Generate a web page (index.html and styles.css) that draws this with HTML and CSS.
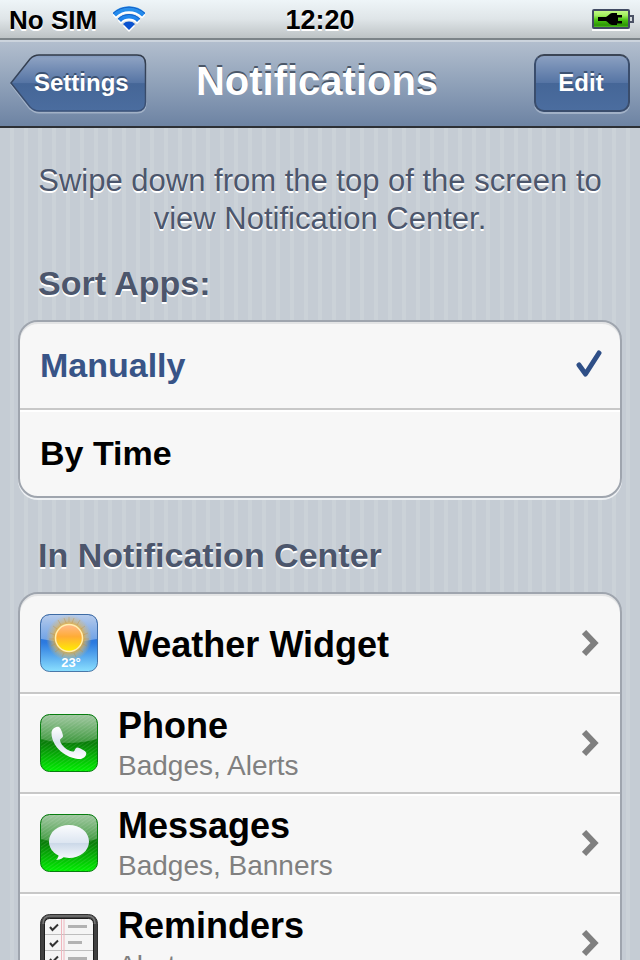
FILE: index.html
```html
<!DOCTYPE html>
<html lang="en">
<head>
<meta charset="utf-8">
<meta name="viewport" content="width=device-width, initial-scale=1">
<title>Notifications</title>
<link rel="stylesheet" href="styles.css">
</head>
<body>
<div class="status">
  <div class="carrier">
    <span>No SIM</span>
    <svg class="wifi" width="32" height="26" viewBox="0 0 32 26" aria-hidden="true">
      <defs><linearGradient id="wf" gradientUnits="userSpaceOnUse" x1="0" y1="0" x2="0" y2="24"><stop offset="0" stop-color="#2b93ea"/><stop offset=".5" stop-color="#1f86ee"/><stop offset="1" stop-color="#0b4fc8"/></linearGradient></defs>
      <g fill="none" stroke="#fff" transform="translate(0 2)"><path d="M1.2 8.8A21.2 21.2 0 0 1 30.8 8.8" stroke-width="5"/><path d="M6.4 14.3A13.7 13.7 0 0 1 25.6 14.3" stroke-width="4.5"/><path d="M16 24L10 18A8.5 8.5 0 0 1 22 18Z" fill="#fff" stroke="none"/></g>
      <g fill="none" stroke="url(#wf)"><path d="M1.2 8.8A21.2 21.2 0 0 1 30.8 8.8" stroke-width="5"/><path d="M6.4 14.3A13.7 13.7 0 0 1 25.6 14.3" stroke-width="4.5"/></g>
      <g fill="none" stroke="#1560c8" stroke-width="1"><path d="M0 7.5A23.5 23.5 0 0 1 32 7.5"/><path d="M5 13A15.5 15.5 0 0 1 27 13"/></g>
      <path d="M16 24L10 18A8.5 8.5 0 0 1 22 18Z" fill="#0b52cf"/>
    </svg>
  </div>
  <time class="clock">12:20</time>
  <svg class="battery" width="42" height="23" viewBox="0 0 42 23" role="img" aria-label="Battery charging">
    <defs><linearGradient id="bt" x1="0" y1="0" x2="0" y2="1"><stop offset="0" stop-color="#c9fb8c"/><stop offset=".3" stop-color="#a2ee5f"/><stop offset=".55" stop-color="#4cc313"/><stop offset=".85" stop-color="#2b9605"/><stop offset="1" stop-color="#6bd63a"/></linearGradient></defs>
    <path d="M0 20H38V22H0Z" fill="#fff" opacity=".9"/>
    <rect x="1" y="1" width="36" height="18" rx="1" fill="url(#bt)" stroke="#414a63" stroke-width="2"/>
    <path d="M38 7H41V13H38" fill="#d5dadd" stroke="#4b5265" stroke-width="2"/>
    <path d="M6 8H14C16 7 18 4 20 4H25V6H30V8.5H26V12H30V14.5H25V16H20C18 16 16 13 14 12H6Z" fill="#000"/>
  </svg>
</div>

<header class="nav">
  <button class="btn back" type="button">
    <svg class="shape" width="138" height="62" viewBox="0 0 138 62" aria-hidden="true">
      <defs><linearGradient id="bk" x1="0" y1="0" x2="0" y2="1"><stop offset="0" stop-color="#8098bd"/><stop offset=".06" stop-color="#8ba0c1"/><stop offset=".5" stop-color="#5574a4"/><stop offset=".51" stop-color="#456697"/><stop offset="1" stop-color="#4b6d9f"/></linearGradient>
      <linearGradient id="be" x1="0" y1="0" x2="0" y2="1"><stop offset="0" stop-color="#323b49"/><stop offset="1" stop-color="#3b5279"/></linearGradient></defs>
      <path d="M1.5 30.5L20 6.5Q24.5 2.5 29 2.5H127Q135.5 2.5 135.5 11V50Q135.5 58.5 127 58.5H29Q24.5 58.5 20 54.5Z" fill="none" stroke="#b9c5d5" stroke-width="2" opacity=".65"/>
      <path d="M1 29L20 5Q24 1 29 1H127Q135.5 1 135.5 10V48Q135.5 57 127 57H29Q24 57 20 53Z" fill="url(#bk)" stroke="url(#be)" stroke-width="1.5"/>
    </svg>
    <span>Settings</span>
  </button>
  <h1>Notifications</h1>
  <button class="btn edit" type="button">Edit</button>
</header>

<main>
  <p class="hint">Swipe down from the top of the screen to view Notification Center.</p>

  <h2 id="sort">Sort Apps:</h2>
  <div class="group" role="radiogroup" aria-labelledby="sort">
    <label class="row option"><input type="radio" name="sort" checked><span>Manually</span>
      <svg class="check" width="26" height="28" viewBox="0 0 26 28" aria-hidden="true"><path d="M3 15L9.5 24L23 3" fill="none" stroke="#2f4f87" stroke-width="5" stroke-linecap="round" stroke-linejoin="round"/></svg>
    </label>
    <label class="row option"><input type="radio" name="sort"><span>By Time</span>
      <svg class="check" width="26" height="28" viewBox="0 0 26 28" aria-hidden="true"><path d="M3 15L9.5 24L23 3" fill="none" stroke="#2f4f87" stroke-width="5" stroke-linecap="round" stroke-linejoin="round"/></svg>
    </label>
  </div>

  <h2>In Notification Center</h2>
  <div class="group">
    <a class="row app" href="#weather">
      <svg width="58" height="58" viewBox="0 0 58 58" aria-hidden="true">
        <defs>
          <linearGradient id="sky" x1="0" y1="0" x2="0" y2="1"><stop offset="0" stop-color="#1c5fc4"/><stop offset=".5" stop-color="#2d7be0"/><stop offset="1" stop-color="#8be0ff"/></linearGradient>
          <linearGradient id="gl" x1="0" y1="0" x2="0" y2="1"><stop offset="0" stop-color="#fff" stop-opacity=".68"/><stop offset="1" stop-color="#fff" stop-opacity=".3"/></linearGradient>
          <radialGradient id="glow"><stop offset=".55" stop-color="#f0a818" stop-opacity=".95"/><stop offset=".75" stop-color="#d9b66a" stop-opacity=".6"/><stop offset="1" stop-color="#d9b66a" stop-opacity="0"/></radialGradient>
          <linearGradient id="sun" x1="0" y1="0" x2="0" y2="1"><stop offset="0" stop-color="#ffb98a"/><stop offset=".45" stop-color="#ffac35"/><stop offset="1" stop-color="#fff000"/></linearGradient>
        </defs>
        <rect x=".5" y=".5" width="57" height="57" rx="9" fill="url(#sky)"/>
        <path d="M1 25V10Q1 1 10 1H48Q57 1 57 10V25Q29 31 1 25Z" fill="url(#gl)"/>
        <circle cx="29" cy="24" r="23" fill="url(#glow)"/>
        <g stroke="#c78c31" stroke-width="1" opacity=".35"><path d="M29 3V8M24 4L26 9M34 4L32 9M18 6L21 11M40 6L37 11M13 12L17 15M45 12L41 15M10 19L15 21M48 19L43 21M9 25H14M49 25H44M11 32L15 30M47 32L43 30M15 38L19 35M43 38L39 35M22 43L24 39M36 43L34 39"/></g>
        <circle cx="29" cy="24" r="13.5" fill="url(#sun)" stroke="#ffeeb0" stroke-width="1.5"/>
        <text class="temp" x="31" y="53" text-anchor="middle">23°</text>
        <rect x=".5" y=".5" width="57" height="57" rx="9" fill="none" stroke="#2c5b95" stroke-opacity=".8"/>
      </svg>
      <span class="text"><b>Weather Widget</b></span>
      <svg class="chev" width="18" height="28" viewBox="0 0 18 28" aria-hidden="true"><path d="M2 3L12.5 14L2 25" fill="none" stroke="#7f7f7f" stroke-width="6"/></svg>
    </a>
    <a class="row app" href="#phone">
      <svg width="58" height="58" viewBox="0 0 58 58" aria-hidden="true">
        <defs>
          <linearGradient id="gr" x1="0" y1="0" x2="0" y2="1"><stop offset="0" stop-color="#3f8f3f"/><stop offset=".5" stop-color="#087d08"/><stop offset="1" stop-color="#00f000"/></linearGradient>
          <linearGradient id="gg" x1="0" y1="0" x2="0" y2="1"><stop offset="0" stop-color="#fff" stop-opacity=".5"/><stop offset="1" stop-color="#fff" stop-opacity=".2"/></linearGradient>
          <linearGradient id="wh" x1="0" y1="0" x2="0" y2="1"><stop offset="0" stop-color="#fff"/><stop offset=".5" stop-color="#dbe4f0"/><stop offset="1" stop-color="#fff"/></linearGradient>
          <pattern id="st" width="3" height="3" patternUnits="userSpaceOnUse" patternTransform="rotate(-35)"><rect width="3" height="1" fill="#fff" opacity=".1"/></pattern>
        </defs>
        <rect x=".5" y=".5" width="57" height="57" rx="9" fill="url(#gr)"/>
        <rect x=".5" y=".5" width="57" height="57" rx="9" fill="url(#st)"/>
        <path d="M1 25V10Q1 1 10 1H48Q57 1 57 10V25Q29 33 1 25Z" fill="url(#gg)"/>
        <path d="M11.5 19C11.5 15 15 12.5 18.5 12.7C20.5 13 23 20 23 22C23 24 20 24.5 20 26.5C21 32 29 38 33.5 37.5C35 37 35 33.5 37.5 33.5C40 34 46 37 46.3 39C46.5 43 42 45.5 38 45C23 43 11.5 31 11.5 19Z" fill="url(#wh)"/>
        <rect x=".5" y=".5" width="57" height="57" rx="9" fill="none" stroke="#087d10"/>
      </svg>
      <span class="text"><b>Phone</b><small>Badges, Alerts</small></span>
      <svg class="chev" width="18" height="28" viewBox="0 0 18 28" aria-hidden="true"><path d="M2 3L12.5 14L2 25" fill="none" stroke="#7f7f7f" stroke-width="6"/></svg>
    </a>
    <a class="row app" href="#messages">
      <svg width="58" height="58" viewBox="0 0 58 58" aria-hidden="true">
        <defs><linearGradient id="bub" x1="0" y1="0" x2="0" y2="1"><stop offset="0" stop-color="#fbfcfe"/><stop offset=".5" stop-color="#dde6f1"/><stop offset=".52" stop-color="#cbd8e8"/><stop offset="1" stop-color="#fafcfe"/></linearGradient></defs>
        <rect x=".5" y=".5" width="57" height="57" rx="9" fill="url(#gr)"/>
        <rect x=".5" y=".5" width="57" height="57" rx="9" fill="url(#st)"/>
        <path d="M1 25V10Q1 1 10 1H48Q57 1 57 10V25Q29 33 1 25Z" fill="url(#gg)"/>
        <path d="M29 11C40 11 49 18 49 27.5C49 37 40 44 29 44L23.5 43.3C21.5 45.3 18.5 46 16 46C17.5 44.5 18.5 43 18.5 41.5C12.5 38.5 9 33.5 9 27.5C9 18 18 11 29 11Z" fill="url(#bub)"/>
        <rect x=".5" y=".5" width="57" height="57" rx="9" fill="none" stroke="#087d10"/>
      </svg>
      <span class="text"><b>Messages</b><small>Badges, Banners</small></span>
      <svg class="chev" width="18" height="28" viewBox="0 0 18 28" aria-hidden="true"><path d="M2 3L12.5 14L2 25" fill="none" stroke="#7f7f7f" stroke-width="6"/></svg>
    </a>
    <a class="row app" href="#reminders">
      <svg width="58" height="58" viewBox="0 0 58 58" aria-hidden="true">
        <rect x=".5" y=".5" width="57" height="57" rx="9" fill="#414141" stroke="#303030"/>
        <path d="M3 10Q3 2 10 2H48Q55 2 55 10" fill="none" stroke="#777" stroke-width="1.5"/>
        <rect x="4.5" y="4.5" width="49" height="49" rx="5" fill="#f5f5f5" stroke="#1d1d1d"/>
        <path d="M5 20.5H53M5 36.5H53" stroke="#bebebe"/>
        <path d="M21.5 5V53M24 5V53" stroke="#efb6be"/>
        <path d="M28 12.5H47M28 28.5H42M28 44.5H47" stroke="#b2b2b2" stroke-width="3"/>
        <path d="M10 13L12.5 16L18 10.5M10 29L12.5 32L18 26.5M10 45L12.5 48L18 42.5" fill="none" stroke="#333" stroke-width="2"/>
      </svg>
      <span class="text"><b>Reminders</b><small>Alerts</small></span>
      <svg class="chev" width="18" height="28" viewBox="0 0 18 28" aria-hidden="true"><path d="M2 3L12.5 14L2 25" fill="none" stroke="#7f7f7f" stroke-width="6"/></svg>
    </a>
  </div>
</main>
</body>
</html>
```
FILE: styles.css
```css
* { box-sizing: border-box; }

body {
  margin: 0;
  height: 100vh;
  display: flex;
  flex-direction: column;
  overflow: hidden;
  font-family: "Liberation Sans", Arial, sans-serif;
  color: #000;
  background: repeating-linear-gradient(90deg, #c5ccd4 0 10px, #cbd2d8 10px 14px);
}

svg { display: block; flex: none; }

.status {
  display: grid;
  grid-template-columns: 1fr auto 1fr;
  align-items: center;
  flex: none;
  height: 40px;
  padding: 0 6px;
  font-size: 26px;
  font-weight: bold;
  text-shadow: 0 2px 0 #fff;
  background: linear-gradient(#eef5f8, #dfe5e8 50%, #bdc3c5);
  border-bottom: 2px solid #7c8488;
}

.carrier { display: flex; align-items: center; gap: 16px; padding-left: 3px; }
.carrier span, .clock { padding-top: 2px; }
.clock { font-size: 27px; }
.battery { justify-self: end; margin-top: 2px; }

.nav {
  display: grid;
  grid-template-columns: 1fr auto 1fr;
  align-items: center;
  flex: none;
  height: 88px;
  padding: 0 10px 2px;
  background: linear-gradient(#b2bece, #8fa1b9 50%, #6d83a3);
  border-top: 2px solid #ccd4dd;
  border-bottom: 2px solid #2d3035;
}

h1 {
  margin: 0;
  font-size: 40px;
  line-height: 44px;
  padding: 0 6px 4px 0;
  color: #fff;
  text-shadow: 0 -2px 0 #4b5768;
}

.btn {
  height: 58px;
  padding: 0 22px 2px;
  border: 0;
  font: bold 24px/28px "Liberation Sans", Arial, sans-serif;
  color: #fff;
  text-shadow: 0 -2px 0 #3c5272;
}

.back {
  position: relative;
  justify-self: start;
  width: 136px;
  padding: 0 18px 0 24px;
  background: none;
}

.back .shape { position: absolute; left: 0; top: 0; }
.back span { position: relative; }

.edit {
  justify-self: end;
  min-width: 96px;
  padding: 0 24px 0 22px;
  border: 2px solid #3a4d6c;
  border-top-color: #3b4555;
  border-radius: 10px;
  background: linear-gradient(#8ba0c1, #5574a4 50%, #456697 50%, #4b6d9f);
  box-shadow: 0 2px 0 rgba(190, 202, 218, .6);
}

main {
  flex: 1;
  min-height: 0;
  overflow-y: auto;
  scrollbar-width: none;
  padding: 34px 18px;
}

.hint {
  margin: 0 20px;
  font-size: 31px;
  line-height: 38px;
  text-align: center;
  color: #4c566c;
  text-shadow: 0 2px 0 #fff;
}

h2 {
  margin: 25px 20px 17px;
  font-size: 34px;
  line-height: 40px;
  color: #4c566c;
  text-shadow: 0 2px 0 #fff;
}

.group {
  overflow: hidden;
  border: 2px solid #9fa5ae;
  border-radius: 20px;
  background: #f7f7f7;
  box-shadow: 0 2px 0 #eef1f4, inset 0 2px 0 #e3e4e5;
}

.group + h2 { margin-top: 37px; }

.row {
  display: flex;
  align-items: center;
  padding: 0 20px;
  color: #000;
  text-decoration: none;
}

.row + .row { border-top: 2px solid #c8c8c8; box-shadow: inset 0 2px 0 #fff; }

.option {
  height: 88px;
  justify-content: space-between;
  padding-right: 18px;
  font-size: 34px;
  font-weight: bold;
}

.option:first-child { height: 86px; }
.option input { position: absolute; opacity: 0; }
.option input:checked + span { color: #385487; }
.check { visibility: hidden; margin-bottom: 2px; }
.option input:checked ~ .check { visibility: visible; }

.app { height: 100px; gap: 20px; }
.app:first-child { height: 98px; }

.text { display: flex; flex-direction: column; flex: 1; padding-top: 4px; }
.text b { font-size: 36px; line-height: 42px; }
.text small { font-size: 28px; line-height: 38px; color: #808080; }

.temp {
  font: bold 13px "Liberation Sans", Arial, sans-serif;
  fill: #fff;
}
```
